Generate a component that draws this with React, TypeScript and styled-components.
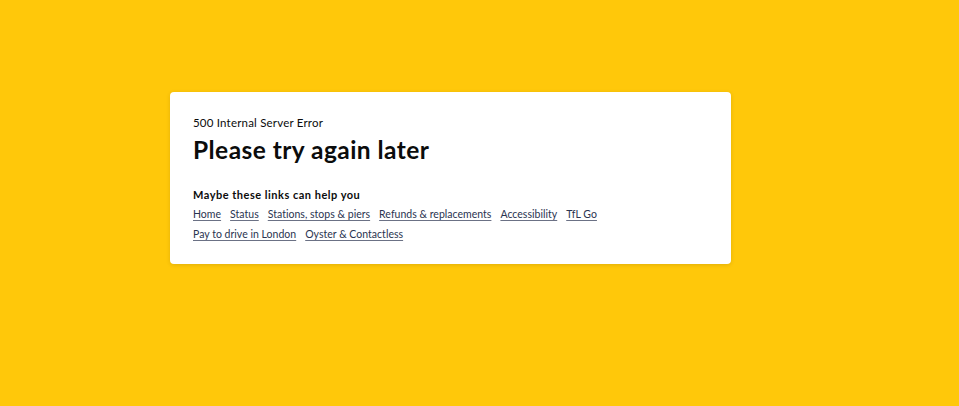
import styled, { createGlobalStyle } from "styled-components";

const links = [
  "Home",
  "Status",
  "Stations, stops & piers",
  "Refunds & replacements",
  "Accessibility",
  "TfL Go",
  "Pay to drive in London",
  "Oyster & Contactless",
];

function App() {
  return (
    <>
      <GlobalStyle />
      <Page>
        <Card>
          <Code>500 Internal Server Error</Code>
          <Title>Please try again later</Title>
          <Subtitle>Maybe these links can help you</Subtitle>
          <LinkList>
            {links.map((l) => (
              <LinkItem key={l} href="#">
                {l}
              </LinkItem>
            ))}
          </LinkList>
        </Card>
      </Page>
    </>
  );
}

export default App;

const GlobalStyle = createGlobalStyle`
  html, body {
    margin: 0;
    padding: 0;
    background: #ffc80a;
  }
  body {
    font-family: Lato, "Noto Sans", sans-serif;
  }
`;

const Page = styled.div`
  width: 959px;
  height: 406px;
  background: #ffc80a;
  padding: 92px 0 0 170px;
  box-sizing: border-box;
`;

const Card = styled.div`
  width: 561px;
  height: 172px;
  box-sizing: border-box;
  background: #ffffff;
  border-radius: 4px;
  box-shadow: 0 1px 4px rgba(0, 0, 0, 0.12);
  padding: 24px 23px 0 23px;
`;

const Code = styled.div`
  font-size: 11.5px;
  color: #0b0c0c;
  line-height: 14px;
  letter-spacing: 0.2px;
`;

const Title = styled.h1`
  margin: 5px 0 0;
  font-size: 24.5px;
  font-weight: 700;
  line-height: 30px;
  color: #0b0c0c;
  letter-spacing: 0.45px;
`;

const Subtitle = styled.div`
  margin-top: 23px;
  font-size: 11px;
  font-weight: 700;
  line-height: 14px;
  color: #0b0c0c;
  letter-spacing: 0.5px;
`;

const LinkList = styled.div`
  display: flex;
  flex-wrap: wrap;
  column-gap: 9px;
  row-gap: 6px;
  margin-top: 5px;
  width: 420px;
`;

const LinkItem = styled.a`
  font-size: 10.5px;
  line-height: 14px;
  color: #2a3450;
  letter-spacing: 0.02px;
  text-decoration: underline;
  text-decoration-color: #6b7185;
  text-underline-offset: 2px;
`;
